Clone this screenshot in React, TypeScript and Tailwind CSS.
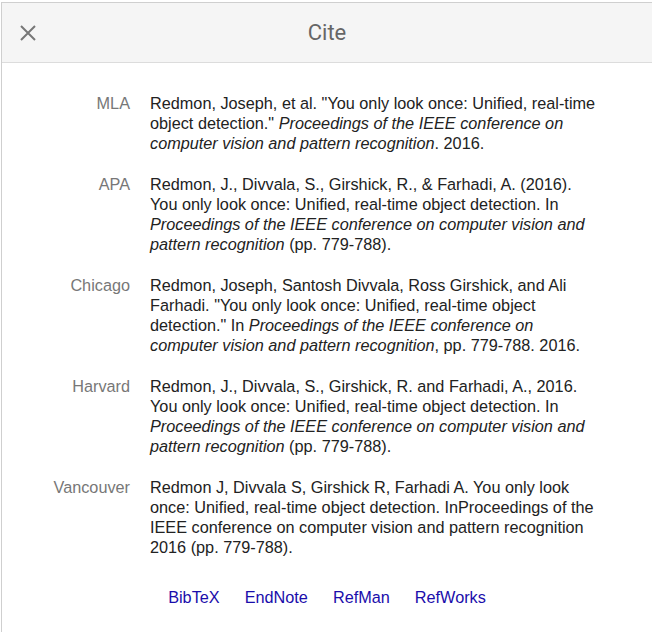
import React from 'react';

type Citation = { label: string; body: React.ReactNode };

const citations: Citation[] = [
	{
		label: 'MLA',
		body: (
			<>
				Redmon, Joseph, et al. "You only look once: Unified, real-time object detection."{' '}
				<i>Proceedings of the IEEE conference on computer vision and pattern recognition</i>. 2016.
			</>
		)
	},
	{
		label: 'APA',
		body: (
			<>
				Redmon, J., Divvala, S., Girshick, R., &amp; Farhadi, A. (2016). You only look once: Unified, real-time
				object detection. In <i>Proceedings of the IEEE conference on computer vision and pattern recognition</i>{' '}
				(pp. 779-788).
			</>
		)
	},
	{
		label: 'Chicago',
		body: (
			<>
				Redmon, Joseph, Santosh Divvala, Ross Girshick, and Ali Farhadi. "You only look once: Unified, real-time
				object detection." In <i>Proceedings of the IEEE conference on computer vision and pattern recognition</i>
				, pp. 779-788. 2016.
			</>
		)
	},
	{
		label: 'Harvard',
		body: (
			<>
				Redmon, J., Divvala, S., Girshick, R. and Farhadi, A., 2016. You only look once: Unified, real-time object
				detection. In <i>Proceedings of the IEEE conference on computer vision and pattern recognition</i> (pp.
				779-788).
			</>
		)
	},
	{
		label: 'Vancouver',
		body: (
			<>
				Redmon J, Divvala S, Girshick R, Farhadi A. You only look once: Unified, real-time object detection.
				InProceedings of the IEEE conference on computer vision and pattern recognition 2016 (pp. 779-788).
			</>
		)
	}
];

const exportLinks = ['BibTeX', 'EndNote', 'RefMan', 'RefWorks'];

export default function App() {
	return (
		<div className="w-[652px] h-[632px] bg-white pt-[2px] pl-[1px] overflow-hidden font-['Liberation_Sans',Arial,sans-serif]">
			<div className="h-full border-t border-l border-[#cfcfcf] flex flex-col">
				{/* Header */}
				<div className="relative h-[60px] bg-[#f5f5f5] border-b border-[#dcdcdc] flex items-center justify-center shrink-0">
					<button className="absolute left-[15px] top-[19px] w-[22px] h-[22px] flex items-center justify-center" aria-label="Close">
						<svg width="18" height="18" viewBox="0 0 18 18" fill="none" stroke="#777" strokeWidth={2}>
							<path d="M2 2L16 16M16 2L2 16" />
						</svg>
					</button>
					<h1 className="text-[22px] leading-none text-[#666] font-['Roboto',Arial,sans-serif]">Cite</h1>
				</div>

				{/* Citations */}
				<div className="pt-[30px] flex flex-col gap-[21px]">
					{citations.map(c => (
						<div key={c.label} className="flex text-[16.25px] leading-[20px]">
							<div className="w-[128px] text-right text-[#777] shrink-0">{c.label}</div>
							<div className="ml-[20px] w-[452px] text-[#222]">{c.body}</div>
						</div>
					))}
				</div>

				{/* Export links */}
				<div className="mt-[30px] flex justify-center gap-[25px] text-[16.25px] leading-[20px]">
					{exportLinks.map(link => (
						<a key={link} href="#" className="text-[#1a0dab]">
							{link}
						</a>
					))}
				</div>
			</div>
		</div>
	);
}
